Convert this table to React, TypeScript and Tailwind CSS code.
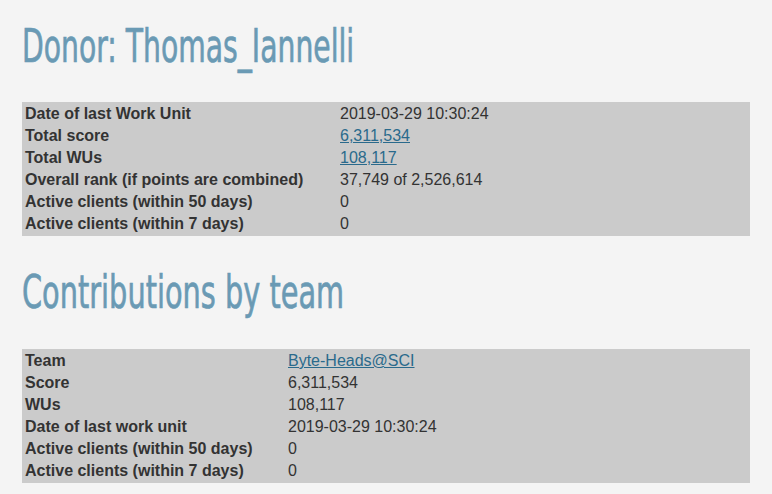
import React from 'react';

type Row = { label: string; value: string; link?: boolean };

const donorRows: Row[] = [
  { label: 'Date of last Work Unit', value: '2019-03-29 10:30:24' },
  { label: 'Total score', value: '6,311,534', link: true },
  { label: 'Total WUs', value: '108,117', link: true },
  { label: 'Overall rank (if points are combined)', value: '37,749 of 2,526,614' },
  { label: 'Active clients (within 50 days)', value: '0' },
  { label: 'Active clients (within 7 days)', value: '0' },
];

const teamRows: Row[] = [
  { label: 'Team', value: 'Byte-Heads@SCI', link: true },
  { label: 'Score', value: '6,311,534' },
  { label: 'WUs', value: '108,117' },
  { label: 'Date of last work unit', value: '2019-03-29 10:30:24' },
  { label: 'Active clients (within 50 days)', value: '0' },
  { label: 'Active clients (within 7 days)', value: '0' },
];

const StatTable: React.FC<{ rows: Row[]; labelWidth: string }> = ({ rows, labelWidth }) => (
  <table className="w-[728px] border-separate border-spacing-[2px] bg-[#cbcbcb] text-[16px] leading-[18px] text-[#333]">
    <tbody>
      {rows.map((r, i) => (
        <tr key={i}>
          <td className={`p-px font-bold ${labelWidth}`}>{r.label}</td>
          <td className="p-px">
            {r.link ? (
              <a href="#" className="text-[#2a6a8c] underline">
                {r.value}
              </a>
            ) : (
              r.value
            )}
          </td>
        </tr>
      ))}
    </tbody>
  </table>
);

const App: React.FC = () => {
  return (
    <div className="min-h-[494px] bg-[#f4f4f4] px-[22px] pt-[17px] font-['Liberation_Sans',Arial,sans-serif]">
      <h1 className="mb-[27px] h-[58px] origin-left scale-x-[0.668] whitespace-nowrap font-['DejaVu_Sans_Condensed',sans-serif] text-[47px] leading-[58px] text-[#6a9ab4] [-webkit-text-stroke:0.7px_#6a9ab4]">
        Donor: Thomas_Iannelli
      </h1>
      <StatTable rows={donorRows} labelWidth="w-[313px]" />
      <h2 className="mb-[28px] mt-[27px] h-[58px] origin-left scale-x-[0.681] whitespace-nowrap font-['DejaVu_Sans_Condensed',sans-serif] text-[47px] leading-[58px] text-[#6a9ab4] [-webkit-text-stroke:0.7px_#6a9ab4]">
        Contributions by team
      </h2>
      <StatTable rows={teamRows} labelWidth="w-[261px]" />
    </div>
  );
};

export default App;
